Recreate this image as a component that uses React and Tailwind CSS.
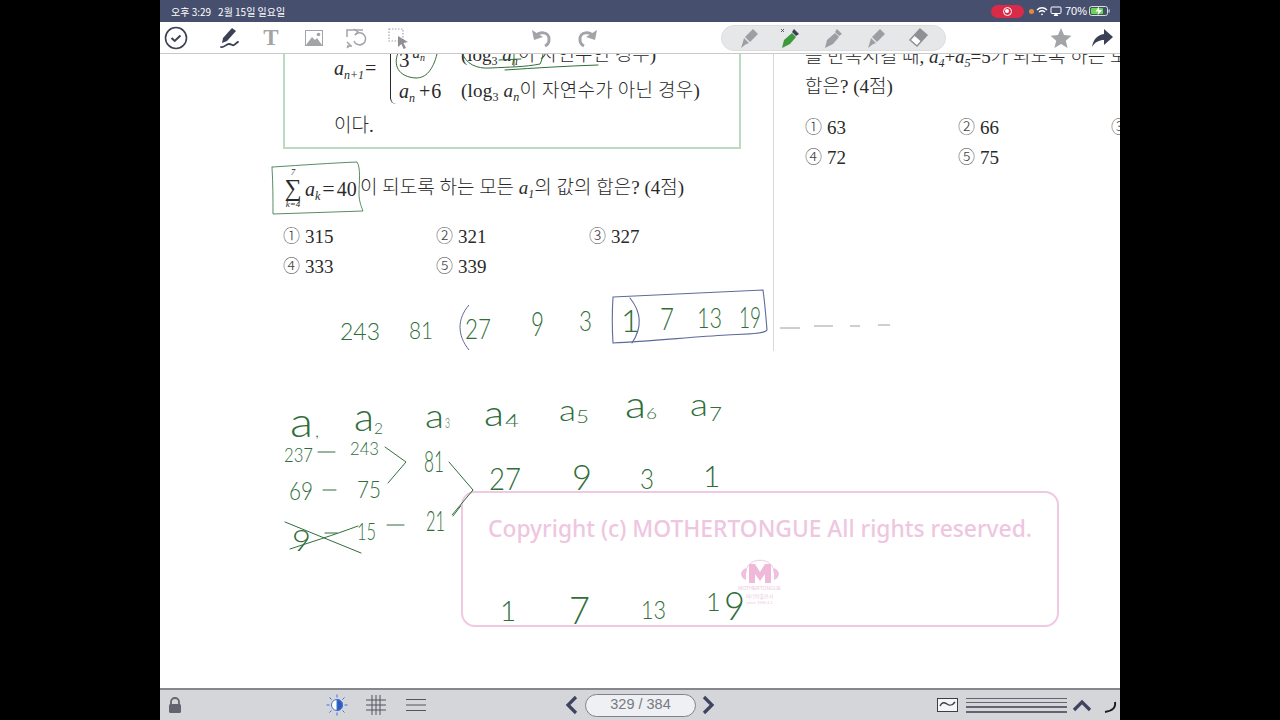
const SERIF = "font-['Liberation_Serif','Noto_Sans_CJK_KR',serif]";
const INK = "#2f6e3a";

function M({ b, s, sup }) {
  return (
    <span className="whitespace-nowrap">
      <i>{b}</i>
      {s && <i className="text-[12px] relative top-[4px]">{s}</i>}
      {sup && <i className="text-[12px] relative -top-[8px]">{sup}</i>}
    </span>
  );
}

function Options({ items }) {
  return (
    <div className="grid grid-cols-[153px_153px_153px] text-[19px] leading-[30px]">
      {items.map(([c, n]) => (
        <div key={c} className="flex whitespace-nowrap">
          <span className="w-[22px] text-[17px] font-light text-[#444]">{c}</span>
          <span>{n}</span>
        </div>
      ))}
    </div>
  );
}

const Gray = "#9c9ea3";

function PenIcon({ fill = Gray }) {
  return (
    <svg viewBox="0 0 24 24" className="w-6 h-6 shrink-0">
      <path d="M16 3l5 5-8 8-5-5z" fill={fill} />
      <path d="M7 12l5 5-3.500 1.500L4 22l1.500-4.500z" fill={fill} />
    </svg>
  );
}

function T({ x, y, s = 22, w, r = 0, children }) {
  return (
    <text
      x={x}
      y={y}
      fontSize={s}
      fill={INK}
      fontFamily="Lato, 'Open Sans', sans-serif"
      fontWeight="300"
      textLength={w}
      lengthAdjust={w ? "spacingAndGlyphs" : undefined}
      transform={r ? `rotate(${r} ${x} ${y})` : undefined}
    >
      {children}
    </text>
  );
}

function TopBar() {
  return (
    <>
      <div className="h-[22px] bg-[#474f6e] flex items-center pl-[11px] text-white text-[10px] font-['Noto_Sans_CJK_KR',sans-serif] shrink-0">
        <span className="whitespace-nowrap">오후 3:29</span>
        <span className="ml-[7px] whitespace-nowrap">2월 15일 일요일</span>
        <div className="ml-auto flex items-center pr-[9px]">
          <div className="w-[33px] h-[13px] rounded-full bg-[#d92b47] flex items-center justify-center">
            <div className="w-[9px] h-[9px] rounded-full border border-white flex items-center justify-center">
              <div className="w-[4px] h-[4px] rounded-full bg-white" />
            </div>
          </div>
          <div className="ml-[5px] w-[5px] h-[5px] rounded-full bg-[#e8893a]" />
          <svg viewBox="0 0 12 10" className="ml-[2px] w-[12px] h-[10px]" fill="none" stroke="white" strokeWidth="1.300">
            <path d="M1 4c3-3 7-3 10 0M3 6c2-1.700 4-1.700 6 0" />
            <circle cx="6" cy="8.300" r="0.900" fill="white" stroke="none" />
          </svg>
          <svg viewBox="0 0 12 10" className="ml-[2px] w-[12px] h-[10px]" fill="none" stroke="white" strokeWidth="1">
            <rect x="1" y="1" width="10" height="6.500" rx="1" />
            <path d="M4 10l2-3 2 3z" fill="white" />
          </svg>
          <span className="ml-[3px] text-[11px] font-['Liberation_Sans',sans-serif] whitespace-nowrap">70%</span>
          <svg viewBox="0 0 22 10" className="ml-[2px] w-[22px] h-[10px]">
            <rect x="0.500" y="0.500" width="18" height="9" rx="2" fill="none" stroke="#cfe8c9" />
            <rect x="2" y="2" width="12" height="6" rx="1" fill="#6bd35a" />
            <path d="M10 0.500L6.500 5.500H9.500L8.500 9.500L13 4H10z" fill="white" />
            <rect x="19.500" y="3.500" width="1.200" height="3" fill="#cfd2dc" />
          </svg>
        </div>
      </div>
      <div className="h-[32px] bg-white border-b border-[#c9c9c9] flex items-center pl-[4px] shrink-0 relative z-10">
        <svg viewBox="0 0 24 24" className="w-6 h-6 shrink-0" fill="none" stroke="#3b4054" strokeWidth="1.600">
          <circle cx="12" cy="12" r="10.500" />
          <path d="M7.500 12l3.200 3 5.800-5.500" strokeWidth="2" />
        </svg>
        <svg viewBox="0 0 24 24" className="w-6 h-6 shrink-0 ml-[29px]" fill="none">
          <path d="M15 2l4 3-9 10-5 2 1-5z" fill="#3b4054" />
          <path d="M4 21c3 1 5-3 8-3s3 2 5 1 3-3 4-3" stroke="#3b4054" strokeWidth="1.800" strokeLinecap="round" />
        </svg>
        <span className="w-6 h-6 shrink-0 ml-[18px] flex items-center justify-center font-['Liberation_Serif',serif] font-bold text-[23px] leading-none text-[#a3a4a8]">T</span>
        <svg viewBox="0 0 24 24" className="w-6 h-6 shrink-0 ml-[19px]" fill="none">
          <rect x="3" y="4" width="18" height="16" fill="#a3a4a8" />
          <rect x="4" y="5" width="16" height="14" fill="#fff" />
          <path d="M4 19l6-8 3 3 2-2 5 7z" fill="#a3a4a8" />
          <circle cx="16.500" cy="8.500" r="1.800" fill="#a3a4a8" />
        </svg>
        <svg viewBox="0 0 24 24" className="w-6 h-6 shrink-0 ml-[18px]" fill="none" stroke="#a3a4a8" strokeWidth="1.500">
          <path d="M19 4H3v7M3 20h5M3 16l3 3-3 3" />
          <path d="M11 9a6 6 0 11-1 6" />
          <path d="M10 3l4 3-3 3" />
        </svg>
        <svg viewBox="0 0 24 24" className="w-6 h-6 shrink-0 ml-[18px]" fill="none">
          <rect x="3" y="3" width="14" height="12" stroke="#a3a4a8" strokeWidth="1.200" strokeDasharray="1.500 1.500" />
          <path d="M12 10l10 6-4.500 1 2.500 5-2.500 1-2-5-3.500 3z" fill="#8e9095" />
        </svg>
        <svg viewBox="0 0 24 24" className="w-6 h-6 shrink-0 ml-[120px]" fill="none">
          <path d="M5 11c3-6 15-6 14 3 0 3-2 5-4 6" stroke="#a3a4a8" strokeWidth="3" />
          <path d="M2 4l2 10 9-3z" fill="#a3a4a8" />
        </svg>
        <svg viewBox="0 0 24 24" className="w-6 h-6 shrink-0 ml-[21px]" fill="none">
          <path d="M19 11C16 5 4 5 5 14c0 3 2 5 4 6" stroke="#a3a4a8" strokeWidth="3" />
          <path d="M22 4l-2 10-9-3z" fill="#a3a4a8" />
        </svg>
        <div className="ml-[122px] w-[225px] h-[26px] rounded-full bg-[#e6e7e9] border border-[#dcdde0] flex items-center pl-[15px]">
          <PenIcon />
          <svg viewBox="0 0 24 24" className="w-6 h-6 shrink-0 ml-[17px]">
            <path d="M14 7l4 4-6 7-8 4 2-8z" fill="#3c9a3c" />
            <path d="M16 3l5 5-3 2-4-4z" fill="#3b4054" />
            <path d="M3 3l3 3M6 3L3 6" stroke="#3b4054" strokeWidth="0.800" />
          </svg>
          <svg viewBox="0 0 24 24" className="w-6 h-6 shrink-0 ml-[19px]">
            <path d="M14 7l4 4-6 7-8 4 2-8z" fill={Gray} />
            <path d="M16 3l5 5-3 2-4-4z" fill={Gray} />
          </svg>
          <span className="ml-[19px] flex"><PenIcon /></span>
          <svg viewBox="0 0 24 24" className="w-6 h-6 shrink-0 ml-[17px]">
            <path d="M15 3l7 6-10 11-7-6z" fill="#fff" stroke="#8e9095" strokeWidth="1.500" />
            <path d="M15 3l7 6-6 6.500-7-6z" fill="#8e9095" />
          </svg>
        </div>
        <svg viewBox="0 0 24 24" className="w-6 h-6 shrink-0 ml-[103px]">
          <path d="M12 2l3 7 7.500.700-5.700 5 1.800 7.300-6.600-4-6.600 4 1.800-7.300-5.700-5L9 9z" fill="#a3a4a8" />
        </svg>
        <svg viewBox="0 0 24 24" className="w-6 h-6 shrink-0 ml-[17px]">
          <path d="M14 3l9 8-9 8v-5c-5 0-9 2-12 7 1-7 5-12 12-13z" fill="#3b4054" />
        </svg>
      </div>
    </>
  );
}

function Ink() {
  return (
    <svg viewBox="160 54 960 634" className="absolute inset-0 w-full h-full pointer-events-none">
      <g fill="none" stroke={INK} strokeWidth="1" strokeLinecap="round">
        <path d="M398 53c-5 12 0 24 18 25 10 0 17-8 21-24" />
        <path d="M462 52c3 12 15 17 28 16 20-1 35-1 50-4 2-4 3-8 3-12" />
        <path d="M505 70c30-2 62-4 93-5" />
        <path d="M499 60l22-1M514 54v12" />
        <path d="M273 167c30-2 60-4 84-5 4 6 2 20 2 32 0 8 3 14 4 17-30 1-60 2-90 3 0-15 0-30-1-47z" strokeWidth="0.800" />
        <path d="M285 522l76 31M290 549c18-6 44-14 68-23" />
        <path d="M385 447l21 15-18 21" />
        <path d="M449 462l24 28-20 26" />
        <path d="M318 452h17M323 490h13M387 525h17M325 533h12" />
      </g>
      <g fill="none" stroke="#5d6a9a" strokeWidth="1.100" strokeLinecap="round">
        <path d="M613 297c50-2 100-5 150-7 2 14 3 28 4 40-2 4-20 4-40 5-35 2-75 6-114 8-1-16-1-30 0-46z" />
        <path d="M630 298c12 15 12 30 2 45" />
      </g>
      <path d="M469 305c-12 14-12 30 0 45" fill="none" stroke="#5d6a9a" strokeWidth="1" />
      <path d="M780 328h20M814 326h19M850 326h10M878 325h12" fill="none" stroke="#9aa0a4" strokeWidth="1" />
      <T x={340} y={340} s={23} w={40}>243</T>
      <T x={409} y={339} s={24} w={24}>81</T>
      <T x={465} y={339} s={27} w={26}>27</T>
      <T x={531} y={336} s={33} w={13}>9</T>
      <T x={579} y={331} s={27} w={13}>3</T>
      <T x={621} y={332} s={32}>1</T>
      <T x={660} y={330} s={31} w={14}>7</T>
      <T x={697} y={328} s={27} w={25}>13</T>
      <T x={739} y={328} s={29} w={22}>19</T>
      <T x={290} y={437} s={42} w={23}>a</T>
      <T x={315} y={437} s={18}>,</T>
      <T x={354} y={431} s={40} w={20}>a</T>
      <T x={374} y={434} s={16} w={9}>2</T>
      <T x={425} y={428} s={34} w={19}>a</T>
      <T x={445} y={428} s={13} w={5}>3</T>
      <T x={484} y={426} s={36} w={20}>a</T>
      <T x={505} y={427} s={17} w={14}>4</T>
      <T x={559} y={421} s={30} w={17}>a</T>
      <T x={576} y={423} s={18} w={13}>5</T>
      <T x={625} y={418} s={38} w={21}>a</T>
      <T x={646} y={419} s={16} w={11}>6</T>
      <T x={690} y={416} s={32} w={18}>a</T>
      <T x={709} y={421} s={20} w={13}>7</T>
      <T x={284} y={462} s={20} w={29}>237</T>
      <T x={350} y={455} s={18} w={29}>243</T>
      <T x={424} y={472} s={30} w={20}>81</T>
      <T x={489} y={490} s={31} w={32}>27</T>
      <T x={572} y={490} s={36} w={20}>9</T>
      <T x={640} y={489} s={28} w={14}>3</T>
      <T x={703} y={487} s={30}>1</T>
      <T x={289} y={500} s={26} w={24}>69</T>
      <T x={357} y={498} s={24} w={24}>75</T>
      <T x={357} y={540} s={24} w={19}>15</T>
      <T x={426} y={531} s={28} w={19}>21</T>
      <T x={292} y={551} s={30} w={19}>9</T>
    </svg>
  );
}

function Watermark() {
  return (
    <div className="absolute left-[301px] top-[437px] w-[598px] h-[136px] rounded-[14px] border-2 border-[#efc9e2] bg-white flex flex-col items-center">
      <div className="mt-[19px] text-[22.800px] leading-[34px] font-medium text-[#eec6e0] whitespace-nowrap font-['Noto_Sans','Open_Sans',sans-serif]">
        Copyright (c) MOTHERTONGUE All rights reserved.
      </div>
      <div className="mt-[13px] -ml-[1px] flex flex-col items-center">
        <svg viewBox="0 0 40 26" className="w-[40px] h-[26px]">
          <path d="M6 14C6 -3 34 -3 34 14" fill="none" stroke="#efc9e2" strokeWidth="1" />
          <path d="M6 9c-3 1-5 4-5 6s2 5 5 6zM34 9c3 1 5 4 5 6s-2 5-5 6z" fill="#efc1de" />
          <path d="M9 24V5h6l5 8 5-8h6v19h-6V15l-5 7-5-7v9z" fill="#efb9da" />
        </svg>
        <span className="text-[5px] leading-[7px] text-[#eec6e0] font-['Liberation_Sans',sans-serif] whitespace-nowrap">MOTHERTONGUE</span>
        <span className="text-[5px] leading-[7px] text-[#eec6e0] font-['Noto_Sans_CJK_KR',sans-serif] whitespace-nowrap">마더텅출판사</span>
        <span className="text-[4px] leading-[7px] text-[#eec6e0] font-['Liberation_Sans',sans-serif] whitespace-nowrap">since 1999.4.1</span>
      </div>
    </div>
  );
}

function TopInk() {
  return (
    <svg viewBox="160 54 960 634" className="absolute inset-0 w-full h-full pointer-events-none">
      <path d="M473 490l-21 25" fill="none" stroke={INK} strokeWidth="1" />
      <T x={500} y={621} s={28}>1</T>
      <T x={569} y={624} s={37} w={21}>7</T>
      <T x={641} y={619} s={25} w={25}>13</T>
      <T x={706} y={611} s={25}>1</T>
      <T x={724} y={620} s={40} w={21}>9</T>
    </svg>
  );
}

function BottomBar() {
  return (
    <div className="h-[32px] bg-[#d4d6da] border-t-2 border-[#85878c] flex items-center pl-[7px] shrink-0">
      <svg viewBox="0 0 16 18" className="w-4 h-[18px] shrink-0" fill="none">
        <path d="M4 9V6a4 4 0 018 0v3" stroke="#62656f" strokeWidth="1.800" />
        <rect x="2" y="8" width="12" height="9" rx="1.500" fill="#62656f" />
      </svg>
      <svg viewBox="0 0 24 24" className="w-6 h-6 shrink-0 ml-[142px]" fill="none" stroke="#3f72d0" strokeWidth="1">
        <circle cx="12" cy="12" r="5.500" fill="#fff" />
        <path d="M12 6.500a5.500 5.500 0 010 11z" fill="#2a5cc0" />
        <path d="M12 1.500v3M12 19.500v3M1.500 12h3M19.500 12h3M4.500 4.500l2 2M17.500 17.500l2 2M19.500 4.500l-2 2M6.500 17.500l-2 2" />
      </svg>
      <svg viewBox="0 0 22 20" className="w-[22px] h-5 shrink-0 ml-[16px]" fill="none" stroke="#52555f" strokeWidth="1">
        <path d="M7 0v20M11 0v20M15 0v20M1 5h20M1 10h20M1 15h20" />
      </svg>
      <svg viewBox="0 0 22 14" className="w-[22px] h-[14px] shrink-0 ml-[18px]" fill="none" stroke="#52555f" strokeWidth="1">
        <path d="M1 1.500h20M1 7h20M1 12.500h20" />
      </svg>
      <svg viewBox="0 0 16 20" className="w-4 h-5 shrink-0 ml-[137px]" fill="none" stroke="#3f4360" strokeWidth="3.200">
        <path d="M12 2L4 10l8 8" />
      </svg>
      <div className="ml-[5px] w-[111px] h-[23px] rounded-full bg-[#eef0f3] border border-[#7f828a] flex items-center justify-center text-[14.500px] text-[#777a80] font-['Liberation_Sans',sans-serif] whitespace-nowrap">
        329 / 384
      </div>
      <svg viewBox="0 0 16 20" className="w-4 h-5 shrink-0 ml-[4px]" fill="none" stroke="#3f4360" strokeWidth="3.200">
        <path d="M4 2l8 8-8 8" />
      </svg>
      <svg viewBox="0 0 21 14" className="w-[21px] h-[14px] shrink-0 ml-[221px]" fill="none" stroke="#3b3e48" strokeWidth="1">
        <rect x="0.500" y="0.500" width="20" height="13" fill="#f4f5f6" />
        <path d="M3 8c2-4 4-4 7-2s5 2 8-2" strokeWidth="1.500" />
      </svg>
      <div className="ml-[8px] w-[101px] flex flex-col gap-[3px] shrink-0">
        <div className="h-px bg-[#62656f]" />
        <div className="h-[1px] bg-[#62656f]" />
        <div className="h-[2px] bg-[#62656f]" />
        <div className="h-[2px] bg-[#62656f]" />
      </div>
      <svg viewBox="0 0 20 14" className="w-5 h-[14px] shrink-0 ml-[5px]" fill="none" stroke="#3f4360" strokeWidth="3.200">
        <path d="M2 12l8-8 8 8" />
      </svg>
      <svg viewBox="0 0 16 14" className="w-4 h-[14px] shrink-0 ml-[11px] mt-[6px]" fill="none" stroke="#1d1d1f" strokeWidth="2">
        <path d="M12 1c1 6-3 9-10 10" />
      </svg>
    </div>
  );
}

export default function App() {
  return (
    <div className="w-[1280px] h-[720px] bg-black flex justify-center overflow-hidden">
      <div className="w-[960px] h-full flex flex-col bg-white">
        <TopBar />
        <div className={`relative flex-1 overflow-hidden bg-white text-[#2a2a2a] text-[19px] ${SERIF}`}>
          <div className="flex h-[297px] items-start">
            <div className="w-[614px] h-full shrink-0 border-r border-[#d9d9d9] pl-[123px]">
              <div className="-mt-[19px] w-[458px] border-2 border-[#b9dcc0] pl-[49px] pb-[5px]">
                <div className="flex items-center h-[72px]">
                  <span className="w-[53px] whitespace-nowrap text-[20px] relative -top-[5px]"><M b="a" s="n+1" /><span className="ml-[1px]">=</span></span>
                  <div className="w-[12px] h-[58px] relative top-[2px]">
                    <div className="ml-[3px] w-[7px] h-full border-l-[1.500px] border-[#2a2a2a] rounded-l-md" />
                  </div>
                  <div className="flex flex-col">
                    <div className="h-[36px] flex items-center whitespace-nowrap">
                      <span className="w-[62px] relative top-[6px] text-[21px]">3<i className="text-[15px] relative -top-[9px] ml-[3px]">a</i><i className="text-[10px] relative -top-[6px]">n</i></span>
                      <span><span>(log</span><span className="text-[12px] relative top-[4px]">3</span> <M b="a" s="n" /><span className="font-light">이 자연수인 경우)</span></span>
                    </div>
                    <div className="h-[36px] flex items-center whitespace-nowrap">
                      <span className="w-[62px] text-[20px]"><M b="a" s="n" /><span className="ml-[4px] tracking-[1px]">+6</span></span>
                      <span className="tracking-[0.200px]"><span>(log</span><span className="text-[12px] relative top-[4px]">3</span> <M b="a" s="n" /><span className="font-light">이 자연수가 아닌 경우)</span></span>
                    </div>
                  </div>
                </div>
                <div className="mt-[1px] h-[32px] leading-[32px] font-light">이다.</div>
              </div>
              <div className="mt-[14px] h-[50px] flex items-center whitespace-nowrap">
                <span className="flex flex-col items-center w-[20px] leading-none">
                  <i className="text-[9px] leading-[9px]">7</i>
                  <span className="text-[24px] leading-[22px]">∑</span>
                  <i className="text-[9px] leading-[10px]">k=4</i>
                </span>
                <span className="ml-[2px] w-[55px] text-[20px]"><M b="a" s="k" /><span className="mx-[2px] text-[22px]">=</span>40</span>
                <span className="font-light">이 되도록 하는 모든 <M b="a" s="1" />의 값의 합은? (4점)</span>
              </div>
              <div className="mt-[9px]">
                <Options items={[["①", "315"], ["②", "321"], ["③", "327"], ["④", "333"], ["⑤", "339"]]} />
              </div>
            </div>
            <div className="flex-1 min-w-0 overflow-hidden pl-[31px] h-full">
              <div className="-mt-[12px] h-[30px] leading-[30px] whitespace-nowrap font-light">를 반복시킬 때, <M b="a" s="4" />+<M b="a" s="5" />=5가 되도록 하는 모든 a₁의 값의</div>
              <div className="h-[30px] leading-[30px] whitespace-nowrap font-light">합은? (4점)</div>
              <div className="mt-[11px]">
                <Options items={[["①", "63"], ["②", "66"], ["③", "69"], ["④", "72"], ["⑤", "75"]]} />
              </div>
            </div>
          </div>
          <Ink />
          <Watermark />
          <TopInk />
        </div>
        <BottomBar />
      </div>
    </div>
  );
}
